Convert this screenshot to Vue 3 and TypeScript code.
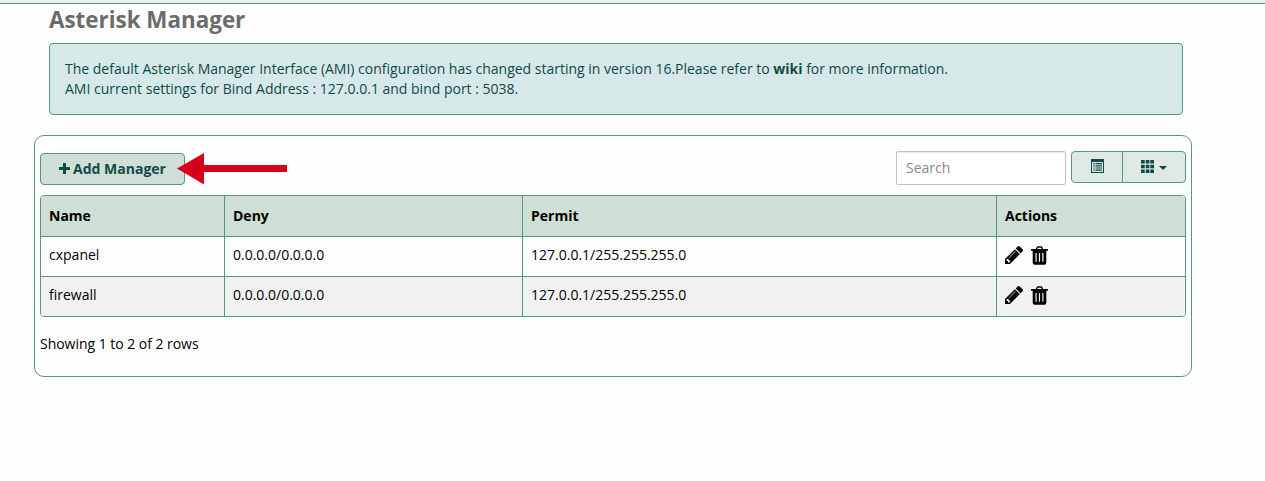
<script setup lang="ts">
interface Manager {
  name: string
  deny: string
  permit: string
}

const managers: Manager[] = [
  { name: 'cxpanel', deny: '0.0.0.0/0.0.0.0', permit: '127.0.0.1/255.255.255.0' },
  { name: 'firewall', deny: '0.0.0.0/0.0.0.0', permit: '127.0.0.1/255.255.255.0' },
]
</script>

<template>
  <div class="page">
    <div class="navbar-edge"></div>
    <h1 class="title">Asterisk Manager</h1>
    <div class="alert">
      The default Asterisk Manager Interface (AMI) configuration has changed starting in version 16.Please refer to <a class="wiki">wiki</a> for more information.<br />
      AMI current settings for Bind Address : 127.0.0.1 and bind port : 5038.
    </div>

    <section class="panel">
      <div class="toolbar">
        <div class="add-wrap">
          <button class="btn add" type="button">
            <svg class="plus" viewBox="0 0 11 11"><path d="M4 0.600q0-.6.6-.6h1.800q.6 0 .6.6V4h3.400q.6 0 .6.6v1.800q0 .6-.6.6H7v3.400q0 .6-.6.6H4.600q-.6 0-.6-.6V7H.6q-.6 0-.6-.6V4.600q0-.6.6-.6H4z" /></svg>
            <span>Add Manager</span>
          </button>
          <svg class="arrow" viewBox="0 0 110 32"><path d="M0 15.500L27 0v12h83v7H27v12.500z" /></svg>
        </div>
        <div class="tools">
          <input class="search" type="text" placeholder="Search" />
          <div class="group">
            <button class="btn toggle" type="button" aria-label="Toggle view">
              <svg class="icon-list" viewBox="0 0 13 14">
                <path fill-rule="evenodd" d="M0 0h13v14H0zM1 3v10h11V3z" />
                <path d="M2.300 4h1.400v1.200H2.300zM4.500 4h6.500v1.200H4.500zM2.300 6.200h1.400v1.200H2.300zM4.500 6.200h6.500v1.200H4.500zM2.300 8.400h1.400v1.200H2.300zM4.500 8.400h6.500v1.200H4.500zM2.300 10.600h1.400v1.200H2.300zM4.500 10.600h6.500v1.200H4.500z" />
              </svg>
            </button>
            <button class="btn columns" type="button" aria-label="Columns">
              <svg class="icon-grid" viewBox="0 0 13 13"><path d="M0 0h3.700v3.400H0zM4.700 0h3.700v3.400H4.700zM9.300 0H13v3.400H9.300zM0 4.800h3.700v3.400H0zM4.700 4.800h3.700v3.400H4.700zM9.300 4.800H13v3.400H9.300zM0 9.600h3.700V13H0zM4.700 9.600h3.700V13H4.700zM9.300 9.600H13V13H9.300z" /></svg>
              <span class="caret"></span>
            </button>
          </div>
        </div>
      </div>

      <div class="table-frame">
        <table>
          <colgroup>
            <col class="c-name" />
            <col class="c-deny" />
            <col class="c-permit" />
            <col />
          </colgroup>
          <thead>
            <tr><th>Name</th><th>Deny</th><th>Permit</th><th>Actions</th></tr>
          </thead>
          <tbody>
            <tr v-for="m in managers" :key="m.name">
              <td>{{ m.name }}</td>
              <td>{{ m.deny }}</td>
              <td>{{ m.permit }}</td>
              <td>
                <div class="actions">
                  <svg class="pencil" viewBox="128 149 1516 1516"><path d="M491 1536l91-91-235-235-91 91v107h128v128h107zm523-928q0-22-22-22-10 0-17 7l-542 542q-7 7-7 17 0 22 22 22 10 0 17-7l542-542q7-7 7-17zm-54-192l416 416-832 832h-416v-416zm683 96q0 53-37 90l-166 166-416-416 166-165q36-38 90-38 53 0 91 38l235 234q37 39 37 91z" /></svg>
                  <svg class="trash" viewBox="0 0 17 19">
                    <path fill-rule="evenodd" d="M0.500 3H4.800L5.700 1Q6.100.3 7 .3h3q.9 0 1.300.7l.9 2h4.300q.5 0 .5.5v.8q0 .5-.5.5H15.300v11.700q0 2.200-2 2.200H3.700q-2 0-2-2.200V4.800H.5Q0 4.800 0 4.300v-.8Q0 3 .5 3zM6.300 3h4.400l-.5-1.200H6.800zM4.500 7v8.700h1.200V7zM7.900 7v8.700h1.200V7zM11.300 7v8.700h1.200V7z" />
                  </svg>
                </div>
              </td>
            </tr>
          </tbody>
        </table>
      </div>
      <div class="summary">Showing 1 to 2 of 2 rows</div>
    </section>
  </div>
</template>

<style>
body {
  margin: 0;
  background: #fefefe;
}
</style>

<style scoped>
.page {
  box-sizing: border-box;
  height: 481px;
  overflow: hidden;
  font: 14px/20px 'Open Sans', 'Noto Sans', sans-serif;
  color: #000;
}
.navbar-edge {
  height: 3px;
  background: #efefef;
  border-bottom: 1px solid #539a76;
}
.title {
  margin: 3px 0 10px 49px;
  font-size: 22.4px;
  line-height: 26px;
  font-weight: 700;
  color: #6b6b6b;
}
.alert {
  box-sizing: border-box;
  width: 1134px;
  height: 72px;
  margin-left: 49px;
  padding: 15px;
  border: 1px solid #539a76;
  border-radius: 4px;
  background: #d7e8e8;
  color: #0f4a48;
  letter-spacing: -0.005px;
}
.wiki {
  font-weight: 700;
}
.panel {
  box-sizing: border-box;
  width: 1158px;
  height: 242px;
  margin: 20px 0 0 34px;
  padding: 15px 5px 0;
  border: 1px solid #539a76;
  border-radius: 10px;
}
.toolbar {
  display: flex;
  justify-content: space-between;
  height: 44px;
}
.add-wrap {
  position: relative;
  padding-top: 2px;
}
.btn {
  box-sizing: border-box;
  display: flex;
  align-items: center;
  justify-content: center;
  height: 32px;
  margin: 0;
  padding: 0;
  border: 1px solid #539a76;
  border-radius: 4px;
  background: #dfe9e3;
  color: #0f4a48;
  font: inherit;
}
.btn svg {
  display: block;
  fill: currentColor;
}
.add {
  width: 145px;
  gap: 3px;
  background: #cfdfd5;
  font-weight: 700;
}
.plus {
  width: 11px;
  height: 11px;
  margin-bottom: 1px;
}
.arrow {
  position: absolute;
  left: 137px;
  top: 2px;
  width: 110px;
  height: 32px;
  fill: #d6001c;
}
.tools {
  display: flex;
  gap: 5px;
}
.search {
  box-sizing: border-box;
  width: 170px;
  height: 34px;
  padding: 5px 9px 7px;
  border: 1px solid #c2c2c2;
  border-radius: 2px;
  background: #fff;
  box-shadow: inset 0 1px 1px rgba(0, 0, 0, 0.075);
  font: inherit;
}
.search::placeholder {
  color: #888;
  opacity: 1;
}
.group {
  display: flex;
}
.toggle {
  width: 52px;
  border-radius: 4px 0 0 4px;
}
.columns {
  width: 64px;
  margin-left: -1px;
  gap: 5px;
  border-radius: 0 4px 4px 0;
}
.icon-list {
  width: 13px;
  height: 14px;
  margin-bottom: 2px;
}
.icon-grid {
  width: 13px;
  height: 13px;
  margin-bottom: 1px;
}
.caret {
  margin-top: 2px;
  border: 4px solid transparent;
  border-top-color: currentColor;
  border-bottom: 0;
}
.table-frame {
  box-sizing: border-box;
  height: 122px;
  overflow: hidden;
  border: 1px solid #539a76;
  border-radius: 4px;
}
table {
  width: 100%;
  border-collapse: separate;
  border-spacing: 0;
  table-layout: fixed;
}
.c-name {
  width: 184px;
}
.c-deny {
  width: 298px;
}
.c-permit {
  width: 474px;
}
th,
td {
  box-sizing: border-box;
  height: 40px;
  padding: 0 8px;
  border-right: 1px solid #539a76;
  border-bottom: 1px solid #539a76;
  text-align: left;
}
th {
  height: 41px;
  background: #cfdfd5;
  font-weight: 700;
}
td {
  padding-bottom: 3px;
}
th:last-child,
td:last-child {
  border-right: 0;
}
tbody tr:last-child td {
  padding-bottom: 4px;
  border-bottom: 0;
}
tbody tr:nth-child(even) {
  background: #f1f1f1;
}
.actions {
  display: flex;
  align-items: center;
  gap: 8px;
}
.pencil {
  width: 18px;
  height: 18px;
}
.trash {
  width: 17px;
  height: 19px;
}
.summary {
  margin-top: 17px;
  letter-spacing: -0.03px;
}
</style>
